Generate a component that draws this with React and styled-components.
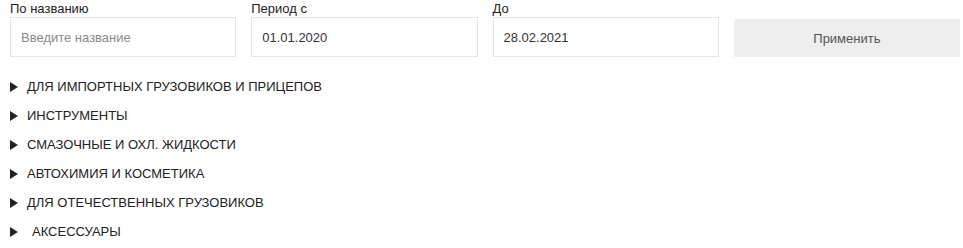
import React from 'react';
import styled, { createGlobalStyle } from 'styled-components';

const GlobalStyle = createGlobalStyle`
  body {
    margin: 0;
    background: #fff;
    font-family: "Liberation Sans", Arial, sans-serif;
    color: #222;
  }
`;

const categories = [
  { title: 'ДЛЯ ИМПОРТНЫХ ГРУЗОВИКОВ И ПРИЦЕПОВ' },
  { title: 'ИНСТРУМЕНТЫ' },
  { title: 'СМАЗОЧНЫЕ И ОХЛ. ЖИДКОСТИ' },
  { title: 'АВТОХИМИЯ И КОСМЕТИКА' },
  { title: 'ДЛЯ ОТЕЧЕСТВЕННЫХ ГРУЗОВИКОВ' },
  { title: 'АКСЕССУАРЫ', wide: true },
];

const Page = styled.div`
  padding: 0 3px 0 10px;
`;

const Filter = styled.form`
  display: grid;
  grid-template-columns: repeat(4, 1fr);
  column-gap: 15px;
  align-items: end;
`;

const Field = styled.label`
  display: flex;
  flex-direction: column;
`;

const Caption = styled.span`
  font-size: 13px;
  line-height: 17px;
  color: #222;
`;

const Input = styled.input`
  box-sizing: border-box;
  height: 40px;
  width: 100%;
  margin: 0;
  padding: 0 10px;
  border: 1px solid #e6e6e6;
  outline: none;
  font-family: inherit;
  font-size: 13px;
  color: #333;
  background: #fff;

  &::placeholder {
    color: #8a8a8a;
  }
`;

const Apply = styled.button`
  height: 38px;
  border: none;
  background: #eeeeee;
  font-family: inherit;
  font-size: 13px;
  color: #555;
  cursor: pointer;
`;

const List = styled.ul`
  list-style: none;
  margin: 15px 0 0;
  padding: 0;
`;

const Row = styled.li`
  display: flex;
  align-items: center;
  height: 29px;
  font-size: 13px;
  color: #222;
  cursor: pointer;
`;

const Arrow = styled.span`
  width: 0;
  height: 0;
  border-left: 8px solid #222;
  border-top: 5px solid transparent;
  border-bottom: 5px solid transparent;
  margin-right: ${(p) => (p.$wide ? '14px' : '9px')};
`;

export default function App() {
  return (
    <Page>
      <GlobalStyle />
      <Filter onSubmit={(e) => e.preventDefault()}>
        <Field>
          <Caption>По названию</Caption>
          <Input placeholder="Введите название" />
        </Field>
        <Field>
          <Caption>Период с</Caption>
          <Input defaultValue="01.01.2020" />
        </Field>
        <Field>
          <Caption>До</Caption>
          <Input defaultValue="28.02.2021" />
        </Field>
        <Apply type="submit">Применить</Apply>
      </Filter>
      <List>
        {categories.map((c) => (
          <Row key={c.title}>
            <Arrow $wide={c.wide} />
            {c.title}
          </Row>
        ))}
      </List>
    </Page>
  );
}
